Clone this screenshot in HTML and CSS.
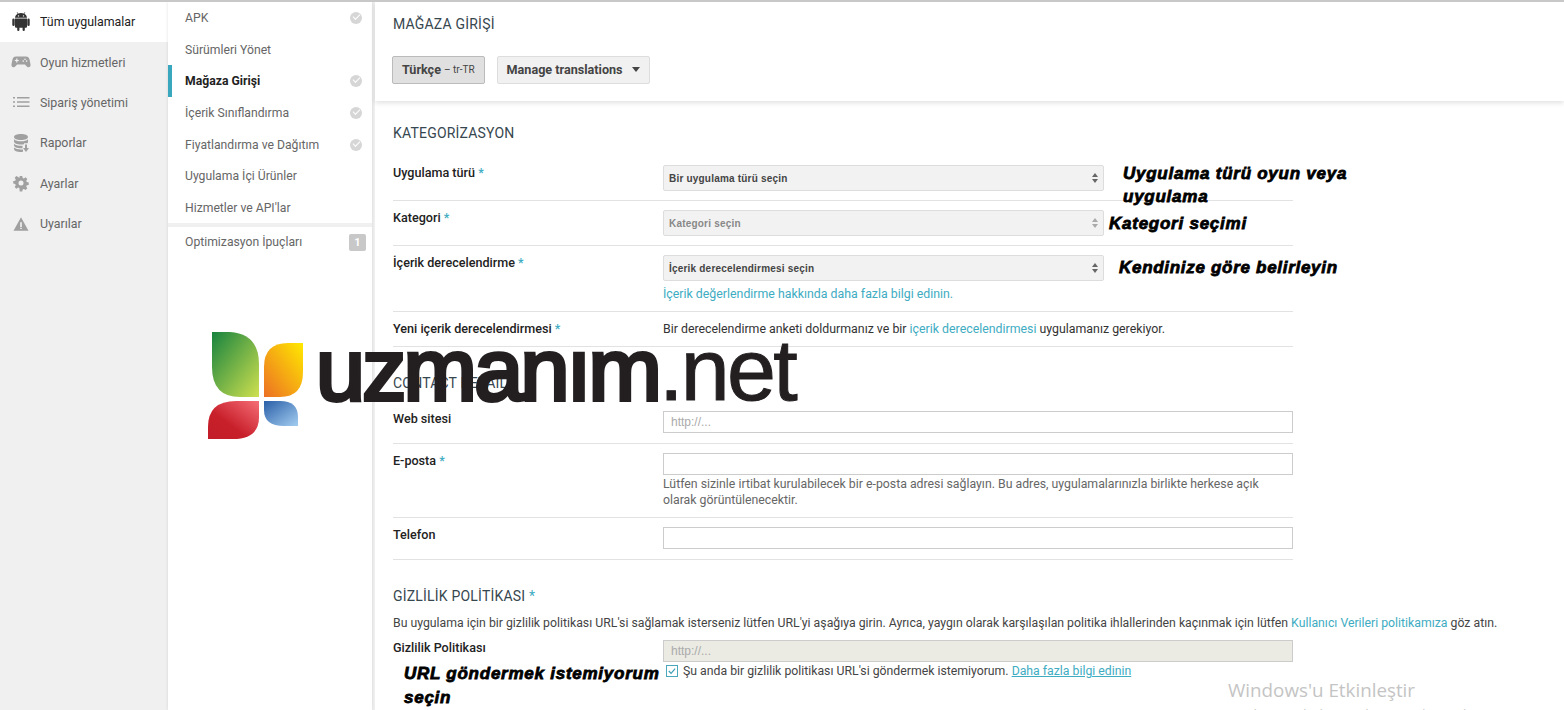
FILE: index.html
```html
<!DOCTYPE html>
<html lang="tr">
<head>
  <meta charset="UTF-8">
  <title>Mağaza Girişi</title>
  <link rel="stylesheet" href="styles.css">
</head>
<body>

  <div class="page">
    <!-- sol menu -->
    <nav class="side-nav">
      <a class="side-item active">
        <svg class="side-icon" viewBox="0 0 20 20"><path d="M4 7.5h12v8.2a1 1 0 0 1-1 1h-1.2v2.2a1.1 1.1 0 0 1-2.2 0v-2.2H8.400v2.200a1.100 1.100 0 0 1-2.200 0v-2.200H5a1 1 0 0 1-1-1zM1.300 8.700a1.200 1.200 0 0 1 2.400 0v5a1.200 1.200 0 0 1-2.400 0zM16.300 8.700a1.200 1.200 0 0 1 2.400 0v5a1.200 1.200 0 0 1-2.400 0zM4 6.800C4.200 4.800 5.300 3.500 6.600 2.800L5.700 1.200l.4-.2 1 1.600A6.500 6.500 0 0 1 12.900 2.600l1-1.600.4.2-.9 1.600C14.700 3.500 15.800 4.800 16 6.800zM7.500 4.200a.7.700 0 1 0 0 1.400.7.700 0 0 0 0-1.400zm5 0a.7.700 0 1 0 0 1.400.7.700 0 0 0 0-1.400z"/></svg>
        <span>Tüm uygulamalar</span>
      </a>
      <a class="side-item">
        <svg class="side-icon" viewBox="0 0 20 20"><path fill-rule="evenodd" d="M5 4.500h10c2 0 3.100 1.200 3.600 3.300l.9 4.400c.3 1.800-.6 3-2 3-1 0-1.800-.6-2.500-1.500l-1-1.300H6l-1 1.300c-.7.900-1.500 1.500-2.500 1.500-1.400 0-2.300-1.200-2-3l.9-4.400C1.900 5.700 3 4.500 5 4.500zM5.200 6.500v1.400H3.800v1.200h1.400v1.400h1.200V9.100h1.400V7.900H6.400V6.500zm8.800 0a.8.800 0 1 0 0 1.600.8.800 0 0 0 0-1.600zm-1.800 1.800a.8.800 0 1 0 0 1.600.8.800 0 0 0 0-1.600zm3.400 0a.8.800 0 1 0 0 1.600.8.800 0 0 0 0-1.600z"/></svg>
        <span>Oyun hizmetleri</span>
      </a>
      <a class="side-item">
        <svg class="side-icon" viewBox="0 0 20 20"><path d="M2 5h2v1.600H2zM6 5h12.500v1.600H6zM2 9.200h2v1.600H2zM6 9.200h12.500v1.600H6zM2 13.400h2V15H2zM6 13.400h12.500V15H6z"/></svg>
        <span>Sipariş yönetimi</span>
      </a>
      <a class="side-item">
        <svg class="side-icon" viewBox="0 0 20 20"><path d="M3 4c0-1.700 3-3 7-3s7 1.300 7 3-3 3-7 3-7-1.300-7-3zM3 6.300C4.300 7.700 7 8.300 10 8.300s5.700-.6 7-2V9c0 .5-.2.900-.6 1.300H13v.9c-1 .2-2 .3-3 .3-4 0-7-1.300-7-3zM3 10.700c1.300 1.400 4 2 7 2h1.500v2.500c-.5 0-1 .1-1.500.1-4 0-7-1.300-7-3zM3 14.500c1.300 1.300 4 2 7 2h2v2.300c-.7.100-1.300.2-2 .2-4 0-7-1.300-7-3zM14 11.500h2v3.500h2l-3 4-3-4h2z"/></svg>
        <span>Raporlar</span>
      </a>
      <a class="side-item">
        <svg class="side-icon" viewBox="-2 -2 24 24"><path fill-rule="evenodd" d="M8.500 1.500h3l.5 2.400 1.500.6 2-1.300 2.100 2.100-1.300 2 .6 1.500 2.400.5v3l-2.400.5-.6 1.500 1.300 2-2.100 2.100-2-1.300-1.500.6-.5 2.400h-3L8 16.100l-1.500-.6-2 1.300-2.100-2.100 1.300-2-.6-1.500-2.400-.5v-3l2.400-.5.6-1.500-1.300-2 2.100-2.100 2 1.300L8 3.900zM10 7a3 3 0 1 0 0 6 3 3 0 0 0 0-6z"/></svg>
        <span>Ayarlar</span>
      </a>
      <a class="side-item">
        <svg class="side-icon" viewBox="-2 -2 24 24"><path fill-rule="evenodd" d="M10 2l9 16H1zM9 8v5.500h2V8zm0 6.500V16h2v-1.500z"/></svg>
        <span>Uyarılar</span>
      </a>
    </nav>

    <!-- ikinci menu -->
    <nav class="sub-nav">
      <a class="sub-item">APK <span class="check"></span></a>
      <a class="sub-item">Sürümleri Yönet</a>
      <a class="sub-item current">Mağaza Girişi <span class="check"></span></a>
      <a class="sub-item">İçerik Sınıflandırma <span class="check"></span></a>
      <a class="sub-item">Fiyatlandırma ve Dağıtım <span class="check"></span></a>
      <a class="sub-item">Uygulama İçi Ürünler</a>
      <a class="sub-item">Hizmetler ve API'lar</a>
      <div class="sub-sep"></div>
      <a class="sub-item tips">Optimizasyon İpuçları <span class="count">1</span></a>
    </nav>

    <main class="main">
      <header class="head-card">
        <h1>MAĞAZA GİRİŞİ</h1>
        <div class="head-btns">
          <button class="btn pressed"><b>Türkçe</b> <small>– tr-TR</small></button>
          <button class="btn"><b>Manage translations</b> <i class="caret"></i></button>
        </div>
      </header>

      <section class="section first">
        <h2>KATEGORİZASYON</h2>
        <div class="row">
          <label>Uygulama türü <em>*</em></label>
          <div><div class="select wide"><span>Bir uygulama türü seçin</span><i class="updown"></i></div></div>
        </div>
        <div class="row">
          <label>Kategori <em>*</em></label>
          <div><div class="select wide disabled"><span>Kategori seçin</span><i class="updown"></i></div></div>
        </div>
        <div class="row">
          <label>İçerik derecelendirme <em>*</em></label>
          <div>
            <div class="select wide"><span>İçerik derecelendirmesi seçin</span><i class="updown"></i></div>
            <p class="help"><a>İçerik değerlendirme hakkında daha fazla bilgi edinin.</a></p>
          </div>
        </div>
        <div class="row plain">
          <label>Yeni içerik derecelendirmesi <em>*</em></label>
          <div class="text">Bir derecelendirme anketi doldurmanız ve bir <a>içerik derecelendirmesi</a> uygulamanız gerekiyor.</div>
        </div>
      </section>

      <section class="section contact">
        <h2>CONTACT DETAILS</h2>
        <div class="row">
          <label>Web sitesi</label>
          <div><div class="input"><span>http://...</span></div></div>
        </div>
        <div class="row">
          <label>E-posta <em>*</em></label>
          <div>
            <div class="input"></div>
            <p class="help grey">Lütfen sizinle irtibat kurulabilecek bir e-posta adresi sağlayın. Bu adres, uygulamalarınızla birlikte herkese açık olarak görüntülenecektir.</p>
          </div>
        </div>
        <div class="row">
          <label>Telefon</label>
          <div><div class="input"></div></div>
        </div>
      </section>

      <section class="section privacy">
        <h2>GİZLİLİK POLİTİKASI <em>*</em></h2>
        <p class="intro">Bu uygulama için bir gizlilik politikası URL'si sağlamak isterseniz lütfen URL'yi aşağıya girin. Ayrıca, yaygın olarak karşılaşılan politika ihlallerinden kaçınmak için lütfen <a>Kullanıcı Verileri politikamıza</a> göz atın.</p>
        <div class="row bare">
          <label class="thin">Gizlilik Politikası</label>
          <div>
            <div class="input off"><span>http://...</span></div>
            <div class="agree">
              <svg class="box" viewBox="0 0 12 12"><rect x=".5" y=".5" width="11" height="11" fill="#fff" stroke="#4aa8bd"/><path d="M2.800 6l2.300 2.400 4-4.800" fill="none" stroke="#3b9fb6" stroke-width="1.200"/></svg>
              <span>Şu anda bir gizlilik politikası URL'si göndermek istemiyorum. <a class="under">Daha fazla bilgi edinin</a></span>
            </div>
          </div>
        </div>
      </section>
    </main>

    <!-- resmin uzerine eklenen notlar -->
    <div class="note n1">Uygulama türü oyun veya uygulama</div>
    <div class="note n2">Kategori seçimi</div>
    <div class="note n3">Kendinize göre belirleyin</div>
    <div class="note n4">URL göndermek istemiyorum seçin</div>

    <div class="brand">
      <svg class="brand-mark" viewBox="0 0 96 108">
        <defs>
          <linearGradient id="lg1" x1="0" y1="0" x2="1" y2="1"><stop offset="0" stop-color="#17833f"/><stop offset="1" stop-color="#cfe04f"/></linearGradient>
          <linearGradient id="lg2" x1="1" y1="0" x2="0" y2="1"><stop offset="0" stop-color="#ffe900"/><stop offset="1" stop-color="#ec6f25"/></linearGradient>
          <linearGradient id="lg3" x1="1" y1="0" x2="0" y2="1"><stop offset="0" stop-color="#f56d75"/><stop offset=".6" stop-color="#c8202b"/><stop offset="1" stop-color="#c11d28"/></linearGradient>
          <linearGradient id="lg4" x1="0" y1="0" x2="1" y2="1"><stop offset="0" stop-color="#2a5fa8"/><stop offset="1" stop-color="#a3cdf0"/></linearGradient>
        </defs>
        <path fill="url(#lg1)" d="M4 0H22Q51 2 51 32V65H32Q4 65 4 35Z"/>
        <path fill="url(#lg2)" d="M95 11V40Q95 65 72 65H56V35Q56 11 80 11Z"/>
        <path fill="url(#lg3)" d="M51 69V85Q51 107 25 107H0V95Q0 69 28 69Z"/>
        <path fill="url(#lg4)" d="M56 69H72Q90 69 90 85V94H76Q56 94 56 78Z"/>
      </svg>
      <span class="brand-name"><b>uzmanım</b>.net</span>
    </div>

    <div class="activate">
      <div class="act-big">Windows'u Etkinleştir</div>
      <div class="act-small">Windows'u etkinleştirmek için Ayarlar'a gidin.</div>
    </div>
  </div>

</body>
</html>
```

FILE: styles.css
```css
html, body {
  margin: 0;
  padding: 0;
  height: 100%;
  overflow: hidden;
}

body {
  font-family: Roboto, 'Liberation Sans', sans-serif;
  font-size: 12.35px;
  color: #333;
  background-color: #fff;
}

.page {
  position: relative;
  display: flex;
  width: 1564px;
  height: 710px;
  overflow: hidden;
  border-top: 2px solid #c8c8c8;
  box-sizing: border-box;
  background-color: #f0f0f0;
}

a {
  color: #40acc2;
  text-decoration: none;
}

/* sol menu */
.side-nav {
  width: 168px;
  flex-shrink: 0;
}

.side-item {
  display: flex;
  align-items: center;
  height: 40.4px;
  box-sizing: border-box;
  padding: 0 0 1px 11px;
  color: #666;
  font-size: 12.4px;
}

.side-item.active {
  background-color: #fff;
  color: #222;
  padding-bottom: 2px;
}

.side-icon {
  width: 20px;
  height: 20px;
  margin-right: 9px;
  fill: #a0a0a0;
}

.active .side-icon {
  fill: #333;
}

/* ikinci menu */
.sub-nav {
  width: 204px;
  flex-shrink: 0;
  background-color: #fff;
  box-shadow: 0 0 3px rgba(0, 0, 0, 0.12);
}

.sub-item {
  display: flex;
  justify-content: space-between;
  align-items: center;
  height: 31.7px;
  padding: 0 9px 0 17px;
  color: #666;
  font-size: 12.2px;
}

.sub-item.current {
  color: #222;
  font-weight: 700;
  border-left: 4px solid #39a7bd;
  padding-left: 13px;
  padding-bottom: 1px;
  box-sizing: border-box;
}

.check {
  position: relative;
  width: 12px;
  height: 12px;
  margin-right: 1px;
  border-radius: 50%;
  background-color: #d6d6d6;
}

.check::after {
  content: "";
  position: absolute;
  left: 3px;
  top: 2.500px;
  width: 6px;
  height: 3px;
  border-left: 1.500px solid #fff;
  border-bottom: 1.500px solid #fff;
  transform: rotate(-45deg);
}

.sub-sep {
  height: 4px;
  margin-top: -1px;
  background-color: #f0f0f0;
}

.tips {
  height: 31px;
  padding-right: 6px;
}

.count {
  width: 17px;
  height: 17px;
  line-height: 17px;
  text-align: center;
  border-radius: 2px;
  background-color: #c8c8c8;
  color: #fff;
  font-weight: 700;
  font-size: 11px;
}

/* ana bolum */
.main {
  flex: 1;
  margin-left: 3px;
  background-color: #fff;
}

.head-card {
  height: 99px;
  padding: 14px 0 0 18px;
  box-sizing: border-box;
  background-color: #fff;
  box-shadow: 0 2px 5px rgba(0, 0, 0, 0.12);
}

h1, h2 {
  margin: 0;
  font-size: 14px;
  font-weight: 400;
  line-height: 16px;
  letter-spacing: 0.2px;
  color: #37474f;
}

.head-btns {
  display: flex;
  gap: 12px;
  margin-top: 24px;
  margin-left: -1px;
}

.btn {
  display: flex;
  align-items: center;
  height: 28px;
  padding: 0 9px 2px;
  border: 1px solid #ddd;
  border-radius: 2px;
  background-color: #f1f1f1;
  font-family: inherit;
  font-size: 12.6px;
  color: #444;
}

.btn b {
  font-weight: 700;
}

.btn small {
  margin-left: 3px;
  font-size: 10px;
}

.btn.pressed {
  background-color: #e0e0e0;
  border-color: #bbb;
}

.caret {
  width: 0;
  height: 0;
  margin-left: 9px;
  border-left: 4px solid transparent;
  border-right: 4px solid transparent;
  border-top: 5px solid #444;
}

.section {
  padding-left: 18px;
  width: 900px;
}

.section h2 {
  padding-bottom: 14px;
}

.section.first {
  padding-top: 24px;
}

.section.contact {
  padding-top: 28px;
}

.section.contact h2 {
  padding-bottom: 11px;
}

.section.privacy {
  width: 1160px;
  padding-top: 28px;
}

.section.privacy h2 {
  padding-bottom: 12px;
}

h2 em, label em {
  color: #40acc2;
  font-style: normal;
}

.row {
  display: grid;
  grid-template-columns: 270px 630px;
  padding: 9px 0;
  border-bottom: 1px solid #e2e2e2;
}

.row:first-of-type {
  padding-top: 10px;
}

.contact .row {
  padding: 9px 0 10px;
}

.row.plain {
  padding: 9px 0 9px;
}

.row.bare {
  border-bottom: none;
  padding: 0;
}

.row label {
  font-size: 12.6px;
  font-weight: 500;
  color: #222;
  line-height: 15px;
}

.select {
  display: flex;
  align-items: center;
  justify-content: space-between;
  height: 26px;
  padding: 0 5px 0 5px;
  box-sizing: border-box;
  border: 1px solid #ddd;
  border-radius: 2px;
  background-color: #f2f2f2;
  font-family: 'Liberation Sans', sans-serif;
  font-size: 10px;
  font-weight: 700;
  letter-spacing: 0.2px;
  color: #444;
}

.select.wide {
  width: 441px;
}

.select.disabled {
  color: #888;
}

.updown {
  position: relative;
  width: 6px;
  height: 10px;
}

.updown::before, .updown::after {
  content: "";
  position: absolute;
  left: 0;
  border-left: 3px solid transparent;
  border-right: 3px solid transparent;
}

.updown::before {
  top: 0;
  border-bottom: 4px solid #666;
}

.updown::after {
  bottom: 0;
  border-top: 4px solid #666;
}

.disabled .updown::before {
  border-bottom-color: #aaa;
}

.disabled .updown::after {
  border-top-color: #aaa;
}

.input {
  display: flex;
  align-items: center;
  height: 22px;
  padding: 0 7px;
  box-sizing: border-box;
  border: 1px solid #ccc;
  color: #aaa;
  font-family: 'Liberation Sans', sans-serif;
  font-size: 12px;
}

.input.off {
  background-color: #ebebe4;
}

.help {
  margin: 6px 0 0;
  line-height: 15px;
}

.help.grey {
  margin: 1px 0 -1px;
  font-size: 12.3px;
  line-height: 16px;
  color: #666;
}

.text {
  padding-top: 1px;
  line-height: 15px;
  color: #333;
}

.intro {
  margin: 0 0 9px;
  font-size: 12.28px;
  line-height: 15px;
  color: #444;
}

.agree {
  display: flex;
  align-items: center;
  gap: 5px;
  margin: 2px 0 0 3px;
  font-size: 12.28px;
  color: #444;
}

.box {
  width: 12px;
  height: 12px;
}

.under {
  text-decoration: underline;
}

/* notlar */
.note {
  position: absolute;
  font-family: 'Liberation Sans', sans-serif;
  font-size: 17px;
  font-weight: 700;
  font-style: italic;
  color: #000;
  line-height: 24px;
  letter-spacing: 0.75px;
  -webkit-text-stroke: 0.8px #000;
}

.n1 { left: 1123px; top: 160px; width: 240px; line-height: 23px; }
.n2 { left: 1109px; top: 210px; }
.n3 { left: 1119px; top: 254px; letter-spacing: 0.7px; }
.n4 { left: 404px; top: 660px; width: 270px; }

.brand {
  position: absolute;
  left: 208px;
  top: 330px;
  display: flex;
  pointer-events: none;
}

.brand-mark {
  width: 96px;
  height: 108px;
}

.brand-name {
  margin-left: 12px;
  margin-top: -12px;
  font-family: 'Liberation Sans', sans-serif;
  font-size: 88px;
  line-height: 100px;
  letter-spacing: -2.700px;
  color: #231f20;
  -webkit-text-stroke: 1px #231f20;
}

.brand-name b {
  font-weight: 400;
  -webkit-text-stroke: 4px #231f20;
}

.activate {
  position: absolute;
  left: 1228px;
  top: 676px;
  font-family: 'Open Sans', sans-serif;
  color: #c4c4c4;
}

.act-big {
  font-size: 18.800px;
  line-height: 25px;
}

.act-small {
  margin-top: 4px;
  font-size: 12px;
  line-height: 16px;
}
```
